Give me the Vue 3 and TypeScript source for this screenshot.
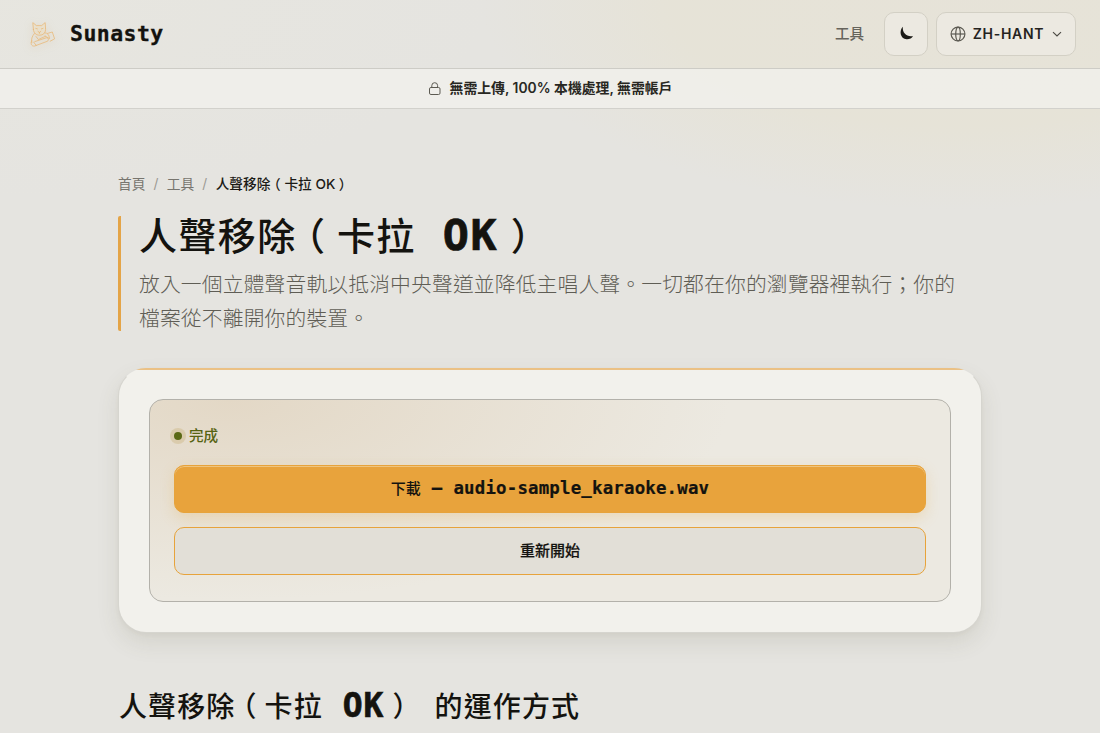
<script setup lang="ts">
const nav: string = '工具'
const language: string = 'ZH-HANT'
const fileName: string = 'audio-sample_karaoke.wav'
const description: string[] = [
  '放入一個立體聲音軌以抵消中央聲道並降低主唱人聲。一切都在你的瀏覽器裡執行；你的',
  '檔案從不離開你的裝置。',
]
</script>

<template>
  <div class="page">
    <header class="header">
      <a class="brand">
        <svg class="cat" viewBox="0 0 32 32" fill="none" stroke="#e9b978" stroke-width="0.8" stroke-linejoin="round" stroke-linecap="round">
          <path d="M7.4 11.5 6.8 4.6 10.4 7.6h5.2l3.6-3 .4 7.2c-.2 3.4-2.6 5.4-6 5.4s-6-2.2-6.2-5.7Z" fill="#f0dfc2" fill-opacity="0.45" />
          <path d="M9.8 10.4l1.6.5M17 10.4l-1.6.5M12 13.4l1.4 1 1.4-1M13.4 14.4v1" />
          <path d="M8.400 15.500c-2.400 2.500-3.400 6-2.600 9.300M18.800 14.800c3.200.2 4.200 2.200 4.600 4.800M21.500 15.400l4.800-1.400 2.300 6.800-4.400 2.400M10 18.500l2.400 3 7-3.200M5.800 22.500c-1.600 2.500-.6 6 2.600 5.600l12.600-4.700c2.500-.8 1.400-4.200-.8-3.600L8.800 23.600M7.500 24l2.800 3.400M19 18l4.600 2.600" />
        </svg>
        <span class="brand-name">Sunasty</span>
      </a>
      <nav class="actions">
        <a class="nav-link">{{ nav }}</a>
        <button class="icon-button" aria-label="theme">
          <svg width="16" height="16" viewBox="0 0 16 16"><path d="M4.900.8C.9 4.400 2 13 8.700 13.300 11.500 13.400 13.900 12.200 15 10 9.800 11.600 3.800 7.300 4.900.8Z" fill="#1b1a16" /></svg>
        </button>
        <button class="language">
          <svg class="globe" width="16" height="16" viewBox="0 0 16 16" fill="none" stroke="#5c5a52" stroke-width="1.2">
            <circle cx="8" cy="8" r="6.9" /><ellipse cx="8" cy="8" rx="2.3" ry="6.9" /><path d="M1.100 8h13.800" />
          </svg>
          <span>{{ language }}</span>
          <svg class="chevron" width="10" height="10" viewBox="0 0 10 10" fill="none" stroke="#4b4942" stroke-width="1.1"><path d="m1 3.100 4 3.900 4-3.900" /></svg>
        </button>
      </nav>
    </header>
    <div class="notice">
      <svg width="13" height="13" viewBox="0 0 13 13" fill="none" stroke="#5c5a52" stroke-width="1"><rect x="1.500" y="5.500" width="10.500" height="7" rx="1.400" /><path d="M3.800 5.500V3.600a2.900 2.900 0 0 1 5.800 0v1.900" /></svg>
      <span>無需上傳, 100% 本機處理, 無需帳戶</span>
    </div>
    <main class="main">
      <nav class="crumbs">
        <span>首頁</span><i>/</i><span>工具</span><i>/</i>
        <b>人聲移除<span class="paren">（</span>卡拉 OK<span class="paren">）</span></b>
      </nav>
      <section class="intro">
        <h1>人聲移除<span class="paren">（</span>卡拉<span class="latin">OK</span><span class="paren">）</span></h1>
        <p><span v-for="line in description" :key="line">{{ line }}</span></p>
      </section>
      <section class="card">
        <div class="panel">
          <div class="status"><span class="dot"></span><span>完成</span></div>
          <button class="primary"><span class="label">下載</span><span class="dash">–</span><span class="file">{{ fileName }}</span></button>
          <button class="secondary"><span class="label">重新開始</span></button>
        </div>
      </section>
      <h2>人聲移除<span class="paren">（</span>卡拉<span class="latin">OK</span><span class="paren">）</span><span class="tail">的運作方式</span></h2>
    </main>
  </div>
</template>

<style>
body { margin: 0; overflow: hidden; }
</style>

<style scoped>
* { box-sizing: border-box; }
.page {
  height: 733px;
  overflow: hidden;
  color: #14130f;
  font-family: Inter, "Noto Sans CJK TC", sans-serif;
  background:
    radial-gradient(ellipse 480px 210px at 960px 0, rgba(231, 226, 211, 0.6), rgba(231, 226, 207, 0.5) 60%, transparent 100%),
    radial-gradient(ellipse 500px 200px at 0 0, rgba(232, 231, 223, 0.6), transparent),
    #e5e4e0;
}
button { font: inherit; color: inherit; margin: 0; }
.header {
  display: flex;
  justify-content: space-between;
  align-items: center;
  height: 69px;
  padding: 0 24px 1px 26px;
  border-bottom: 1px solid #cdccc6;
}
.brand { display: flex; align-items: center; gap: 12px; }
.cat { width: 32px; height: 32px; filter: drop-shadow(0 2px 4px rgba(210, 160, 90, 0.3)); }
.brand-name { font: bold 21.5px/30px "DejaVu Sans Mono", monospace; letter-spacing: 0.45px; -webkit-text-stroke: 0.3px #14130f; }
.actions { display: flex; align-items: center; }
.nav-link { margin-right: 20px; padding-bottom: 3px; font-size: 14.5px; font-weight: 500; color: #66645c; }
.icon-button, .language {
  display: flex;
  align-items: center;
  justify-content: center;
  height: 44px;
  border: 1px solid #d3d0c5;
  border-radius: 10px;
  background: #ece9e1;
}
.icon-button { width: 44px; padding: 0; margin-right: 8px; }
.language { width: 140px; padding: 0; font-size: 14px; font-weight: 600; letter-spacing: 0.72px; color: #25231e; }
.globe { margin-right: 7px; }
.chevron { margin-left: 8px; }
.notice {
  display: flex;
  justify-content: center;
  align-items: center;
  gap: 9px;
  height: 40px;
  font-size: 13.85px;
  font-weight: 600;
  color: #282722;
  background: rgba(241, 240, 236, 0.8);
  border-bottom: 1px solid #d2d1cc;
}
.notice span { padding-bottom: 3px; }
.main { width: 864px; margin: 0 auto; padding-top: 64px; }
.crumbs { display: flex; align-items: center; height: 20px; font-size: 13.7px; color: #77756e; }
.crumbs i { font-style: normal; margin: 0 8.5px 0 8px; color: #9c9a94; }
.crumbs b { font-weight: 500; color: #1b1a16; white-space: nowrap; }
.paren {
  display: inline-block;
  padding: 0 0.27em 0 0.25em;
  letter-spacing: 0;
  font-family: "Noto Sans CJK TC", sans-serif;
  font-feature-settings: "halt" 1;
}
.intro {
  height: 115px;
  margin-top: 23px;
  padding-left: 18px;
  border-left: 3px solid #e4a447;
  border-radius: 2px;
}
h1, h2 { margin: 0; font-family: "Noto Sans CJK TC", sans-serif; font-weight: 500; white-space: nowrap; }
h1 { height: 52px; font-size: 38px; line-height: 35px; letter-spacing: 1.4px; }
h1 .paren { padding: 0 0.31em 0 0.25em; }
.latin { font-family: "DejaVu Sans Mono", monospace; font-weight: 700; -webkit-text-stroke: 0.7px #14130f; }
h1 .latin { margin-left: 27px; margin-right: 3px; font-size: 43.5px; letter-spacing: 1.6px; }
.intro p { margin: 0; font-size: 20.8px; line-height: 34px; font-weight: 300; color: #5f5d55; letter-spacing: 0.13px; }
.intro p span { display: block; white-space: nowrap; }
.card {
  height: 265px;
  margin-top: 37px;
  padding: 30px 30px 0;
  border: 1px solid #d6d5cf;
  border-top-color: transparent;
  border-radius: 28px;
  background-color: #f2f1ec;
  background-image: linear-gradient(#ebc185, #ebc185);
  background-size: 100% 2px;
  background-repeat: no-repeat;
  background-origin: border-box;
  box-shadow: 0 10px 22px rgba(90, 88, 60, 0.12), 0 2px 4px rgba(90, 88, 60, 0.04);
}
.panel {
  height: 203px;
  padding: 24px;
  border: 1px solid #b3b1aa;
  border-radius: 14px;
  background: radial-gradient(ellipse 500px 200px at 10% 0, #e3d8c6, transparent), #ece9e1;
}
.status { display: flex; align-items: center; gap: 7px; height: 24px; font-size: 14.6px; font-weight: 500; color: #566313; }
.status span:last-child { padding-bottom: 3px; }
.dot { width: 8px; height: 8px; border-radius: 50%; background: #5b6915; box-shadow: 0 0 0 4px rgba(200, 175, 120, 0.38); }
.primary, .secondary {
  display: flex;
  align-items: center;
  justify-content: center;
  width: 100%;
  height: 48px;
  padding: 0;
  border: 1px solid #e7a33b;
  border-radius: 10px;
  font-size: 15px;
  font-weight: 500;
}
.label { padding-bottom: 4px; }
.primary { margin-top: 17px; background: #e8a33c; box-shadow: inset 0 1px 0 #efc47f, 0 5px 14px rgba(229, 176, 83, 0.28); }
.primary .file, .primary .dash { padding-bottom: 2px; font: bold 17.4px/24px "DejaVu Sans Mono", monospace; letter-spacing: 0.19px; -webkit-text-stroke: 0.2px #14130f; }
.dash { margin: 0 11px; }
.secondary { margin-top: 14px; background: #e2dfd7; }
.secondary .label { -webkit-text-stroke: 0.2px #14130f; }
h2 { margin-top: 51px; padding-left: 1px; font-size: 28px; line-height: 42px; letter-spacing: 1.1px; }
h2 .paren { padding-right: 0.29em; }
h2 .latin { margin-left: 20px; margin-right: 1px; font-size: 33px; letter-spacing: 1px; }
h2 .tail { margin-left: 20px; }
</style>
